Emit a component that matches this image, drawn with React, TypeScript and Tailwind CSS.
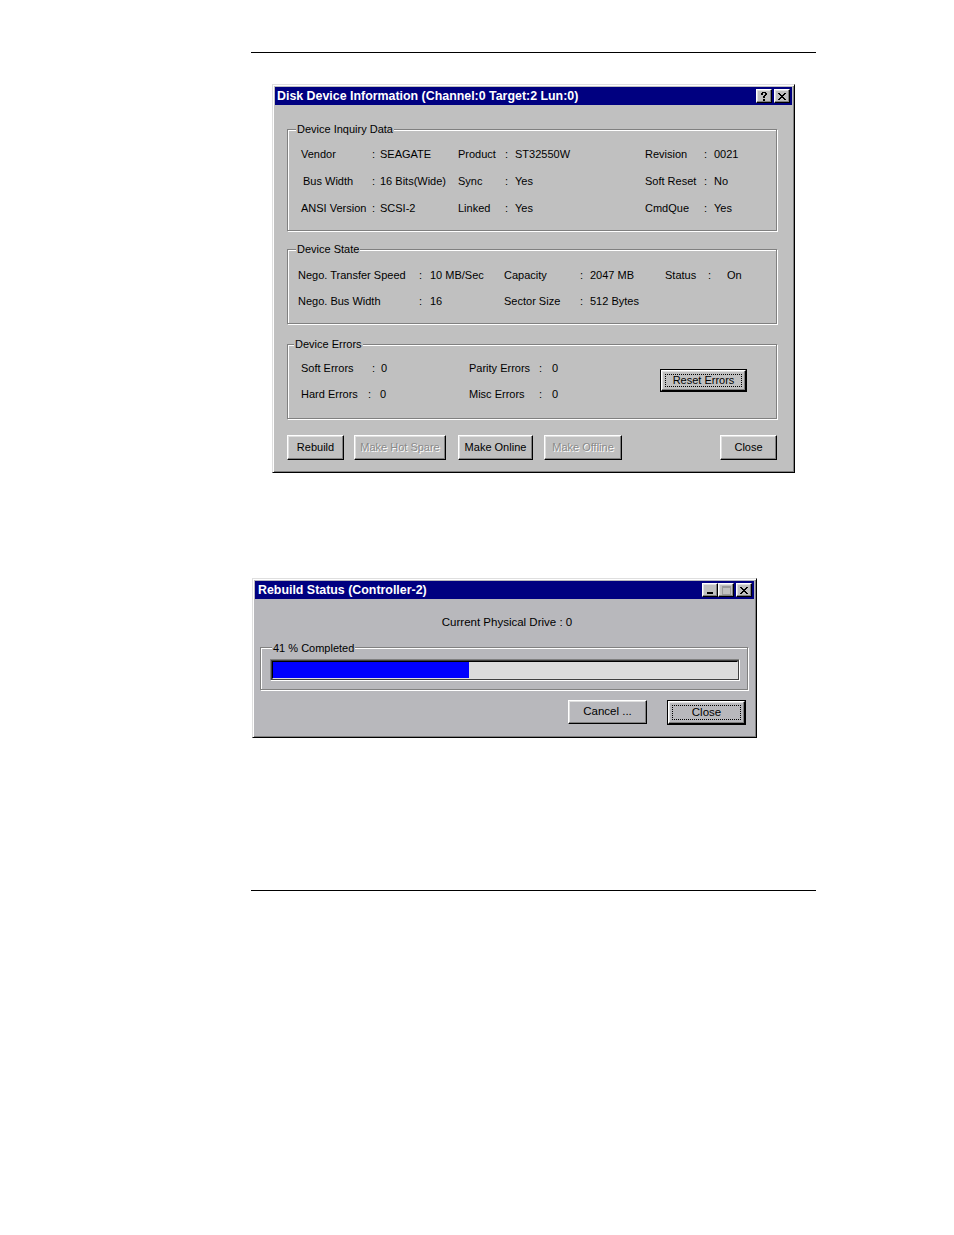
import React from "react";

type Cell = { t: string; c?: string };

const bevel =
  "border border-t-white border-l-white border-r-black border-b-black shadow-[inset_-1px_-1px_0_#808080,inset_1px_1px_0_#dfdfdf]";

function WinButton({
  label,
  w,
  h,
  disabled,
  isDefault,
  size = "text-[11px]",
  bg = "bg-[#c0c0c0]",
}: {
  label: string;
  w: string;
  h: string;
  disabled?: boolean;
  isDefault?: boolean;
  size?: string;
  bg?: string;
}) {
  if (isDefault) {
    return (
      <div className={`${w} ${h} border border-black flex`}>
        <div className={`flex-1 ${bg} ${bevel} p-[3px] flex`}>
          <div className={`flex-1 border border-dotted border-black flex items-center justify-center ${size} text-black`}>
            {label}
          </div>
        </div>
      </div>
    );
  }
  return (
    <div
      className={`${w} ${h} ${bg} ${bevel} flex items-center justify-center ${size} ${
        disabled ? "text-[#8a8a8a] [text-shadow:1px_1px_0_#fff]" : "text-black"
      }`}
    >
      {label}
    </div>
  );
}

function TitleBtn({ children }: { children: React.ReactNode }) {
  return (
    <div className={`w-[16px] h-[14px] bg-[#c0c0c0] ${bevel} flex items-center justify-center`}>
      {children}
    </div>
  );
}

const XGlyph = () => (
  <svg width="8" height="7" viewBox="0 0 8 7" shapeRendering="crispEdges">
    <path d="M0 0h2v1h-2zM6 0h2v1h-2zM1 1h2v1h-2zM5 1h2v1h-2zM2 2h4v1h-4zM3 3h2v1h-2zM2 4h4v1h-4zM1 5h2v1h-2zM5 5h2v1h-2zM0 6h2v1h-2zM6 6h2v1h-2z" fill="#000" />
  </svg>
);

const QGlyph = () => (
  <svg width="6" height="9" viewBox="0 0 6 9" shapeRendering="crispEdges">
    <path d="M1 0h4v1h-4zM0 1h2v2h-2zM4 1h2v2h-2zM3 3h2v1h-2zM2 4h2v2h-2zM2 7h2v2h-2z" fill="#000" />
  </svg>
);

const MinGlyph = () => (
  <svg width="8" height="8" viewBox="0 0 8 8" shapeRendering="crispEdges">
    <path d="M1 6h6v2h-6z" fill="#000" />
  </svg>
);

const MaxGlyph = () => (
  <svg width="9" height="9" viewBox="0 0 9 9" shapeRendering="crispEdges">
    <path d="M0 0h9v2h-9zM0 2h1v7h-1zM8 2h1v7h-1zM0 8h9v1h-9z" fill="#9a9a9a" />
  </svg>
);

function Group({
  label,
  labelCls,
  className,
  children,
}: {
  label: string;
  labelCls: string;
  className: string;
  children: React.ReactNode;
}) {
  return (
    <div className={`border border-[#808080] shadow-[inset_1px_1px_0_#fff,1px_1px_0_#fff] ${className}`}>
      <div className="-mt-[7px] flex">
        <span className={labelCls}>{label}</span>
      </div>
      {children}
    </div>
  );
}

function GridRow({ cells }: { cells: Cell[] }) {
  return (
    <>
      {cells.map((c, i) => (
        <div key={i} className={`h-[14px] leading-[14px] whitespace-nowrap ${c.c ?? ""}`}>
          {c.t}
        </div>
      ))}
    </>
  );
}

export default function App() {
  return (
    <div className='w-[954px] h-[1235px] bg-white overflow-hidden font-["Liberation_Sans",Arial,sans-serif] text-black'>
      <div className="mt-[52px] ml-[251px] w-[565px] h-[1px] bg-black" />

      {/* Dialog 1 */}
      <div className="mt-[31px] ml-[272px] w-[523px] h-[389px] bg-[#c0c0c0] border border-t-[#dfdfdf] border-l-[#dfdfdf] border-r-black border-b-black shadow-[inset_1px_1px_0_#fff,inset_-1px_-1px_0_#808080] p-[2px] flex flex-col">
        <div className="h-[18px] bg-[#000080] flex items-center pl-[2px] pr-[2px]">
          <span className="text-white font-bold text-[12.4px] leading-[18px] whitespace-nowrap">
            Disk Device Information (Channel:0 Target:2 Lun:0)
          </span>
          <div className="ml-auto flex gap-[2px]">
            <TitleBtn>
              <QGlyph />
            </TitleBtn>
            <TitleBtn>
              <XGlyph />
            </TitleBtn>
          </div>
        </div>

        <div className="pl-[12px] text-[11px]">
          <Group
            label="Device Inquiry Data"
            labelCls="ml-[8px] px-[1px] bg-[#c0c0c0] h-[13px] leading-[13px]"
            className="mt-[24px] w-[490px] pb-[15px]"
          >
            <div className="mt-[11px] pl-[13px] grid grid-cols-[71px_8px_78px_47px_10px_130px_59px_10px_1fr] gap-y-[13px]">
              <GridRow
                cells={[
                  { t: "Vendor" },
                  { t: ":" },
                  { t: "SEAGATE" },
                  { t: "Product" },
                  { t: ":" },
                  { t: "ST32550W" },
                  { t: "Revision" },
                  { t: ":" },
                  { t: "0021" },
                ]}
              />
              <GridRow
                cells={[
                  { t: "Bus Width", c: "pl-[2px]" },
                  { t: ":" },
                  { t: "16 Bits(Wide)" },
                  { t: "Sync" },
                  { t: ":" },
                  { t: "Yes" },
                  { t: "Soft Reset" },
                  { t: ":" },
                  { t: "No" },
                ]}
              />
              <GridRow
                cells={[
                  { t: "ANSI Version" },
                  { t: ":" },
                  { t: "SCSI-2" },
                  { t: "Linked" },
                  { t: ":" },
                  { t: "Yes" },
                  { t: "CmdQue" },
                  { t: ":" },
                  { t: "Yes" },
                ]}
              />
            </div>
          </Group>

          <Group
            label="Device State"
            labelCls="ml-[8px] px-[1px] bg-[#c0c0c0] h-[13px] leading-[13px]"
            className="mt-[18px] w-[490px] pb-[15px]"
          >
            <div className="mt-[12px] pl-[10px] grid grid-cols-[121px_11px_74px_76px_10px_75px_43px_19px_1fr] gap-y-[12px]">
              <GridRow
                cells={[
                  { t: "Nego. Transfer Speed" },
                  { t: ":" },
                  { t: "10 MB/Sec" },
                  { t: "Capacity" },
                  { t: ":" },
                  { t: "2047 MB" },
                  { t: "Status" },
                  { t: ":" },
                  { t: "On" },
                ]}
              />
              <GridRow
                cells={[
                  { t: "Nego. Bus Width" },
                  { t: ":" },
                  { t: "16" },
                  { t: "Sector Size" },
                  { t: ":" },
                  { t: "512 Bytes" },
                  { t: "" },
                  { t: "" },
                  { t: "" },
                ]}
              />
            </div>
          </Group>

          <Group
            label="Device Errors"
            labelCls="ml-[6px] px-[1px] bg-[#c0c0c0] h-[13px] leading-[13px]"
            className="mt-[20px] w-[490px] pb-[17px]"
          >
            <div className="mt-[10px] pl-[13px] flex items-start">
              <div className="w-[359px] flex flex-col gap-y-[12px]">
                <div className="flex h-[14px] leading-[14px] whitespace-nowrap">
                  <span className="w-[71px]">Soft Errors</span>
                  <span className="w-[9px]">:</span>
                  <span className="w-[88px]">0</span>
                  <span className="w-[70px]">Parity Errors</span>
                  <span className="w-[13px]">:</span>
                  <span>0</span>
                </div>
                <div className="flex h-[14px] leading-[14px] whitespace-nowrap">
                  <span className="w-[67px]">Hard Errors</span>
                  <span className="w-[12px]">:</span>
                  <span className="w-[89px]">0</span>
                  <span className="w-[70px]">Misc Errors</span>
                  <span className="w-[13px]">:</span>
                  <span>0</span>
                </div>
              </div>
              <div className="mt-[8px]">
                <WinButton label="Reset Errors" w="w-[87px]" h="h-[23px]" isDefault />
              </div>
            </div>
          </Group>

          <div className="mt-[16px] w-[490px] flex">
            <WinButton label="Rebuild" w="w-[57px]" h="h-[25px]" />
            <div className="ml-[10px]">
              <WinButton label="Make Hot Spare" w="w-[92px]" h="h-[25px]" disabled />
            </div>
            <div className="ml-[12px]">
              <WinButton label="Make Online" w="w-[75px]" h="h-[25px]" />
            </div>
            <div className="ml-[11px]">
              <WinButton label="Make Offline" w="w-[78px]" h="h-[25px]" disabled />
            </div>
            <div className="ml-auto">
              <WinButton label="Close" w="w-[57px]" h="h-[25px]" />
            </div>
          </div>
        </div>
      </div>

      {/* Dialog 2 */}
      <div className="mt-[105px] ml-[252px] w-[505px] h-[160px] bg-[#b8b8bc] border border-t-[#dfdfdf] border-l-[#dfdfdf] border-r-black border-b-black shadow-[inset_1px_1px_0_#fff,inset_-1px_-1px_0_#808080] p-[2px] flex flex-col">
        <div className="h-[18px] bg-[#000080] flex items-center pl-[3px] pr-[2px]">
          <span className="text-white font-bold text-[12.4px] leading-[18px] whitespace-nowrap">
            Rebuild Status (Controller-2)
          </span>
          <div className="ml-auto flex">
            <TitleBtn>
              <MinGlyph />
            </TitleBtn>
            <TitleBtn>
              <MaxGlyph />
            </TitleBtn>
            <div className="ml-[2px]">
              <TitleBtn>
                <XGlyph />
              </TitleBtn>
            </div>
          </div>
        </div>

        <div className="text-[11.5px] pl-[5px] pr-[8px]">
          <div className="mt-[15px] h-[16px] leading-[16px] text-center pl-[8px]">
            Current Physical Drive : 0
          </div>
          <Group
            label="41 % Completed"
            labelCls="ml-[11px] px-[1px] bg-[#b8b8bc] h-[14px] leading-[14px] text-[11px]"
            className="mt-[17px] w-[488px] pb-[8px]"
          >
            <div className="mt-[4px] ml-[9px] w-[470px] h-[22px] border border-t-[#808080] border-l-[#808080] border-r-white border-b-white p-[1px] bg-[#404040]">
              <div className="w-full h-full bg-[#dcdcdc] flex border border-t-black border-l-black border-r-[#dfdfdf] border-b-[#dfdfdf]">
                <div className="w-[196px] h-full bg-[#0000ff]" />
              </div>
            </div>
          </Group>
          <div className="mt-[10px] flex justify-end">
            <WinButton label="Cancel ..." w="w-[79px]" h="h-[24px]" size="text-[11.5px]" bg="bg-[#b8b8bc]" />
            <div className="ml-[20px]">
              <WinButton label="Close" w="w-[79px]" h="h-[25px]" size="text-[11.5px]" bg="bg-[#b8b8bc]" isDefault />
            </div>
          </div>
        </div>
      </div>

      <div className="mt-[152px] ml-[251px] w-[565px] h-[1px] bg-black" />
    </div>
  );
}
